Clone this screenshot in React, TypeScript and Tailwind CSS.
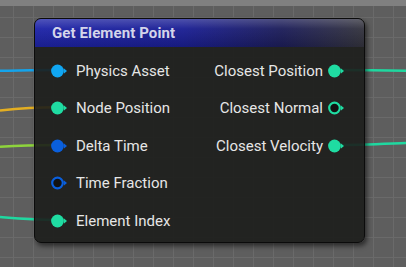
import React from "react";

type PinProps = { color: string; hollow?: boolean };

const Pin = ({ color, hollow }: PinProps) => (
  <svg width="17" height="14" viewBox="0 0 17 14" className="shrink-0">
    {hollow ? (
      <circle cx="6.5" cy="7" r="5.3" fill="#121212" stroke={color} strokeWidth="2.2" />
    ) : (
      <circle cx="6.5" cy="7" r="6.4" fill={color} />
    )}
    <polygon points="13,4.4 16,7 13,9.6" fill={color} />
  </svg>
);

const inputs = [
  { label: "Physics Asset", color: "#10a6f2" },
  { label: "Node Position", color: "#1fdca2" },
  { label: "Delta Time", color: "#0a5fdc" },
  { label: "Time Fraction", color: "#0a5fdc", hollow: true },
  { label: "Element Index", color: "#1fdca2" },
];

const outputs = [
  { label: "Closest Position", color: "#1fdca2" },
  { label: "Closest Normal", color: "#1fdca2", hollow: true },
  { label: "Closest Velocity", color: "#1fdca2" },
];

export default function App() {
  return (
    <div className="relative w-[406px] h-[267px] overflow-hidden bg-[#5e5e5e] bg-[linear-gradient(to_right,#6a6a6a_1px,transparent_1px),linear-gradient(to_bottom,#6a6a6a_1px,transparent_1px)] bg-[size:20px_20px] bg-[position:13px_17px] font-['Roboto',sans-serif]">
      <div className="h-[6px] bg-[#808080]" />

      {/* wires */}
      <svg className="absolute inset-0" width="406" height="267" viewBox="0 0 406 267" fill="none">
        <path d="M0 70.8 C 20 70.5, 40 70, 57 70" stroke="#14a4ec" strokeWidth="2.4" />
        <path d="M0 110.5 C 18 108.6, 35 107.3, 57 107.3" stroke="#e3ae22" strokeWidth="2.4" />
        <path d="M0 146.8 C 18 145.6, 35 145, 57 145" stroke="#8ed43c" strokeWidth="2.4" />
        <path d="M0 217 C 18 218.4, 35 219.8, 57 220" stroke="#1fd8a0" strokeWidth="2.4" />
        <path d="M335 70 C 360 70, 380 70.2, 406 70.8" stroke="#1fd8a0" strokeWidth="2.4" />
        <path d="M335 145 C 360 145, 380 144, 406 143" stroke="#1fd8a0" strokeWidth="2.4" />
      </svg>

      {/* node */}
      <div className="relative ml-[34px] mt-[12px] w-[331px] h-[225px] rounded-[7px] border border-[#0b0b0b] bg-[rgba(28,29,27,0.9)] shadow-[2px_3px_5px_rgba(0,0,0,0.55)] overflow-hidden flex flex-col">
        <div className="relative h-[28px] shrink-0 flex items-center pl-[17px] bg-[linear-gradient(to_right,#1e24a8_0%,#1b1f94_45%,#1d1e5a_75%,#34343e_100%)]">
          <div className="absolute inset-0 bg-[linear-gradient(to_bottom,rgba(255,255,255,0.22)_0%,rgba(255,255,255,0.04)_35%,rgba(0,0,0,0.15)_100%)]" />
          <span className="relative text-[15px] font-bold text-[#d4d5ea] tracking-[0.1px]">Get Element Point</span>
        </div>

        <div className="flex flex-1 justify-between pt-[5px] pl-[16px] pr-[19px]">
          <div className="flex flex-col">
            {inputs.map((p) => (
              <div key={p.label} className="h-[37.5px] flex items-center gap-[8px]">
                <Pin color={p.color} hollow={p.hollow} />
                <span className="text-[15px] text-[#e6e6e6]">{p.label}</span>
              </div>
            ))}
          </div>
          <div className="flex flex-col items-end">
            {outputs.map((p) => (
              <div key={p.label} className="h-[37.5px] flex items-center gap-[5px]">
                <span className="text-[15px] text-[#e6e6e6]">{p.label}</span>
                <Pin color={p.color} hollow={p.hollow} />
              </div>
            ))}
          </div>
        </div>
      </div>
    </div>
  );
}
